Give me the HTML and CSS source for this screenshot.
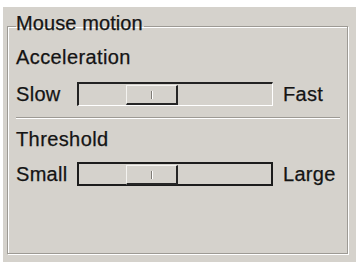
FILE: index.html
```html
<!DOCTYPE html>
<html>
<head>
<meta charset="utf-8">
<link rel="stylesheet" href="styles.css">
</head>
<body>
<div class="panel">
  <fieldset class="group">
    <legend class="group-title">Mouse motion</legend>
    <div class="caption">Acceleration</div>
    <div class="slider-row">
      <span class="lbl-min">Slow</span>
      <div class="trough">
        <div class="thumb"><span class="grip"></span></div>
      </div>
      <span class="lbl-max">Fast</span>
    </div>
    <div class="sep"></div>
    <div class="caption caption-2">Threshold</div>
    <div class="slider-row slider-row-2">
      <span class="lbl-min">Small</span>
      <div class="trough trough-focus">
        <div class="thumb"><span class="grip"></span></div>
      </div>
      <span class="lbl-max">Large</span>
    </div>
  </fieldset>
</div>
</body>
</html>
```
FILE: styles.css
```css
html, body {
  margin: 0;
  padding: 0;
  background: #ffffff;
}
body {
  font-family: "Liberation Sans", Arial, sans-serif;
  font-size: 20px;
  color: #141414;
  -webkit-text-stroke: 0.25px #141414;
}
.panel {
  margin: 7px 0 0 3px;
  width: 353px;
  height: 255px;
  background: #d5d2cc;
  padding-top: 6px;
  box-sizing: border-box;
  overflow: hidden;
}
.group {
  margin: 0 8px 0 4px;
  padding: 7px 7px 0 8px;
  height: 241px;
  box-sizing: border-box;
  border: 1px solid #9d9a94;
  box-shadow: inset 1px 1px 0 #ffffff, 1px 1px 0 #ffffff;
  min-width: 0;
}
.group-title {
  padding: 0 1px 6px 0;
  line-height: 20px;
  margin-left: 0;
  letter-spacing: 0.1px;
}
.caption {
  line-height: 23px;
  white-space: nowrap;
  letter-spacing: 0.4px;
}
.slider-row {
  display: flex;
  align-items: center;
  height: 24px;
  margin-top: 13px;
  line-height: 23px;
  white-space: nowrap;
  letter-spacing: 0.3px;
}
.lbl-min {
  width: 61px;
  flex: none;
}
.lbl-max {
  margin-left: 10px;
}
.trough {
  width: 196px;
  height: 24px;
  box-sizing: border-box;
  border-style: solid;
  border-width: 2px 1px 1px 2px;
  border-color: #222222 #ffffff #ffffff #222222;
  display: flex;
  align-items: flex-start;
  flex: none;
}
.trough-focus {
  border-width: 2px;
  border-color: #1c1c1c;
}
.thumb {
  margin-left: 47px;
  margin-top: 1px;
  width: 52px;
  height: 20px;
  box-sizing: border-box;
  border-style: solid;
  border-width: 1px 2px 2px 1px;
  border-color: #f4f3f0 #262626 #262626 #f4f3f0;
  display: flex;
  justify-content: center;
  align-items: center;
}
.grip {
  width: 1px;
  height: 8px;
  background: #7e7b75;
  box-shadow: 1px 0 0 #ffffff;
}
.sep {
  margin-top: 11px;
  height: 0;
  border-top: 1px solid #9d9a94;
  border-bottom: 1px solid #ffffff;
}
.caption-2 {
  margin-top: 9px;
}
.slider-row-2 {
  margin-top: 11px;
}
```
